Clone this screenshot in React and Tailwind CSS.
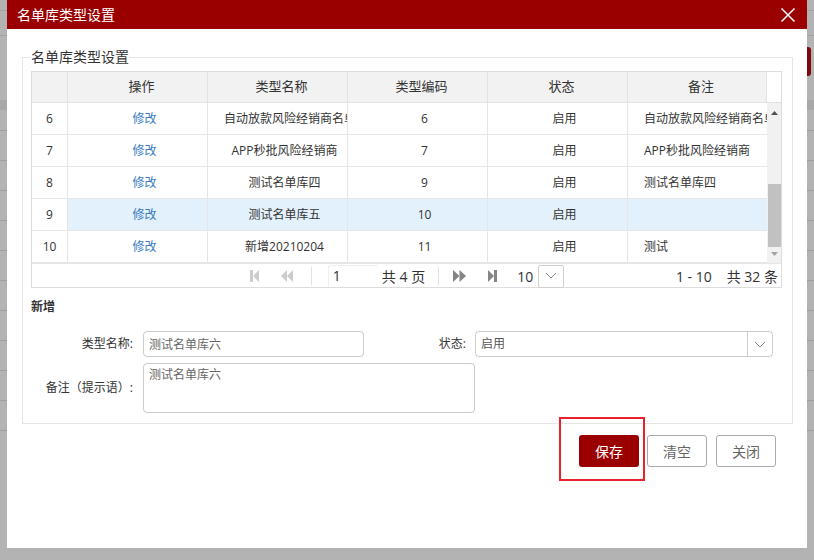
import React from 'react';

const rows = [
    { no: 6, name: '自动放款风险经销商名单', code: '6', status: '启用', note: '自动放款风险经销商名单' },
    { no: 7, name: 'APP秒批风险经销商', code: '7', status: '启用', note: 'APP秒批风险经销商' },
    { no: 8, name: '测试名单库四', code: '9', status: '启用', note: '测试名单库四' },
    { no: 9, name: '测试名单库五', code: '10', status: '启用', note: '', active: true },
    { no: 10, name: '新增20210204', code: '11', status: '启用', note: '测试' },
];

const cols = 'grid grid-cols-[36px_140px_140px_140px_140px_139px]';

const Chevron = () => (
    <svg width="12" height="7" viewBox="0 0 12 7">
        <path d="M1 1 L6 6 L11 1" fill="none" stroke="#8a8a8a" strokeWidth="1" />
    </svg>
);

const App = () => {
    return (
        <div className="relative w-[814px] h-[560px] overflow-hidden bg-[#b3b3b3] font-['Open_Sans','Noto_Sans_CJK_SC',sans-serif]">
            {/* page behind the dialog */}
            <div className="flex flex-col">
                <div className="h-[11px] border-b border-[#a3a3a3]" />
                <div className="h-[25px] border-b border-[#a3a3a3]" />
                <div className="h-[64px] flex justify-end pt-[11px]">
                    <div className="w-[40px] h-[29px] mr-[3px] rounded-r-[3px] bg-[#7d0a0a]" />
                </div>
                <div className="h-[10px] bg-[#a8a8a8]" />
                <div className="h-[21px] border-b border-[#9e9e9e]" />
                {Array.from({ length: 10 }).map((_, i) => (
                    <div key={i} className="h-[30px] border-b border-[#9e9e9e]" />
                ))}
            </div>

            {/* dialog */}
            <div className="absolute left-[7px] top-0 w-[800px] h-[548px] bg-white flex flex-col">
                <div className="h-[29px] bg-[#9a0000] flex items-center justify-between pl-[10px] pr-[12px]">
                    <span className="text-white text-[14px] leading-[20px]">名单库类型设置</span>
                    <svg width="14" height="14" viewBox="0 0 14 14">
                        <path d="M0.5 0.5 L13.5 13.5 M13.5 0.5 L0.5 13.5" stroke="#ffffff" strokeWidth="1.5" />
                    </svg>
                </div>

                <fieldset className="ml-[15px] mt-[18px] w-[771px] h-[377px] border border-[#e5e5e5] px-[8px]">
                    <legend className="text-[14px] leading-[20px] text-[#333] px-0">名单库类型设置</legend>

                    {/* grid */}
                    <div className="mt-[4px] w-[751px] border border-[#dddddd] text-[#333]">
                        <div className="flex h-[31px] border-b border-[#e2e2e2]">
                            <div className={`${cols} bg-[#f2f2f2] text-[13px]`}>
                                {['', '操作', '类型名称', '类型编码', '状态', '备注'].map((h, i) => (
                                    <div key={i} className={`flex items-center justify-center border-r border-[#e2e2e2] ${i > 0 ? 'pl-[8px]' : ''}`}>
                                        {h}
                                    </div>
                                ))}
                            </div>
                            <div className="flex-1" />
                        </div>

                        <div className="flex">
                            <div className="w-[735px] text-[12px]">
                                {rows.map((r) => (
                                    <div key={r.no} className={`${cols} h-[32px] border-b border-[#e6e6e6]`}>
                                        <div className="flex items-center justify-center border-r border-[#e6e6e6]">{r.no}</div>
                                        <div className={`flex items-center justify-center pl-[14px] border-r border-[#e6e6e6] text-[#3a7bbf] ${r.active ? 'bg-[#e3f1fc]' : ''}`}>修改</div>
                                        <div className={`leading-[31px] pl-[16px] pr-[2px] text-center whitespace-nowrap overflow-hidden border-r border-[#e6e6e6] ${r.active ? 'bg-[#e3f1fc]' : ''}`}>{r.name}</div>
                                        <div className={`flex items-center justify-center pl-[14px] border-r border-[#e6e6e6] ${r.active ? 'bg-[#e3f1fc]' : ''}`}>{r.code}</div>
                                        <div className={`flex items-center justify-center pl-[14px] border-r border-[#e6e6e6] ${r.active ? 'bg-[#e3f1fc]' : ''}`}>{r.status}</div>
                                        <div className={`leading-[31px] pl-[16px] whitespace-nowrap overflow-hidden ${r.active ? 'bg-[#e3f1fc]' : ''}`}>{r.note}</div>
                                    </div>
                                ))}
                            </div>
                            {/* scrollbar */}
                            <div className="w-[14px] h-[160px] bg-[#f1f1f1] flex flex-col items-center">
                                <svg className="mt-[8px]" width="7" height="4" viewBox="0 0 7 4">
                                    <polygon points="3.5,0 7,4 0,4" fill="#505050" />
                                </svg>
                                <div className="mt-[69px] w-[13px] h-[63px] bg-[#c1c1c1]" />
                                <svg className="mt-[5px]" width="7" height="4" viewBox="0 0 7 4">
                                    <polygon points="0,0 7,0 3.5,4" fill="#a3a3a3" />
                                </svg>
                            </div>
                        </div>

                        {/* pager */}
                        <div className="h-[24px] border-t border-[#e6e6e6] grid grid-cols-[1fr_auto_1fr] items-center text-[14px]">
                            <div />
                            <div className="flex items-center h-full">
                                <svg width="10" height="12" viewBox="0 0 10 12">
                                    <rect x="1" y="0" width="3" height="12" fill="#cccccc" />
                                    <polygon points="10,0 10,12 4,6" fill="#cccccc" />
                                </svg>
                                <svg className="ml-[22px]" width="12" height="12" viewBox="0 0 12 12">
                                    <polygon points="6,0 6,12 0,6" fill="#cccccc" />
                                    <polygon points="12,0 12,12 6,6" fill="#cccccc" />
                                </svg>
                                <div className="ml-[18px] w-px h-[18px] bg-[#e2e2e2]" />
                                <div className="ml-[16px] w-[50px] h-[22px] border-t border-l border-[#f0f0f0] rounded-tl-[3px] pl-[4px] leading-[20px]">1</div>
                                <span className="ml-[4px]">共 4 页</span>
                                <div className="ml-[13px] w-px h-[18px] bg-[#e2e2e2]" />
                                <svg className="ml-[14px]" width="13" height="12" viewBox="0 0 13 12">
                                    <polygon points="0,0 0,12 6.5,6" fill="#858585" />
                                    <polygon points="6.5,0 6.5,12 13,6" fill="#858585" />
                                </svg>
                                <svg className="ml-[22px]" width="10" height="12" viewBox="0 0 10 12">
                                    <polygon points="0,0 0,12 6,6" fill="#858585" />
                                    <rect x="6" y="0" width="3" height="12" fill="#858585" />
                                </svg>
                                <div className="ml-[14px] w-[26px] pl-[5px] leading-[22px] mt-[2px]">10</div>
                                <div className="w-[26px] h-[23px] border border-[#cfcfcf] rounded-[2px] flex items-start justify-center pt-[6px]">
                                    <Chevron />
                                </div>
                            </div>
                            <div className="flex justify-end pr-[3px] whitespace-nowrap">
                                <span>1 - 10</span>
                                <span className="ml-[15px]">共 32 条</span>
                            </div>
                        </div>
                    </div>

                    {/* add form */}
                    <div className="mt-[9px] text-[12px] leading-[20px] font-bold text-[#333]">新增</div>

                    <div className="mt-[14px] flex items-center text-[12px] text-[#333]">
                        <div className="w-[102px] text-right">类型名称:</div>
                        <input
                            readOnly
                            defaultValue="测试名单库六"
                            className="ml-[10px] w-[221px] h-[26px] border border-[#cccccc] rounded-[4px] px-[5px] text-[#666] outline-none"
                        />
                        <div className="w-[102px] text-right">状态:</div>
                        <div className="ml-[9px] w-[298px] h-[26px] border border-[#cccccc] rounded-[4px] flex">
                            <div className="flex-1 pl-[5px] leading-[24px] text-[#555]">启用</div>
                            <div className="w-[25px] border-l border-[#cccccc] flex items-center justify-center">
                                <Chevron />
                            </div>
                        </div>
                    </div>

                    <div className="mt-[6px] flex items-center text-[12px] text-[#333]">
                        <div className="w-[102px] text-right">备注（提示语）:</div>
                        <textarea
                            readOnly
                            defaultValue="测试名单库六"
                            className="ml-[10px] w-[332px] h-[50px] border border-[#cccccc] rounded-[4px] px-[5px] py-[2px] text-[#666] resize-none outline-none"
                        />
                    </div>
                </fieldset>

                {/* buttons */}
                <div className="mt-[11px] flex justify-end pr-[31px] text-[14px]">
                    <div className="relative">
                        <button className="w-[60px] h-[32px] rounded-[3px] bg-[#9a0000] text-white">保存</button>
                        <div className="absolute -left-[20px] -top-[18px] w-[86px] h-[64px] border-2 border-[#e8212b]" />
                    </div>
                    <button className="ml-[8px] w-[60px] h-[32px] rounded-[3px] border border-[#aaaaaa] bg-white text-[#666]">清空</button>
                    <button className="ml-[9px] w-[60px] h-[32px] rounded-[3px] border border-[#aaaaaa] bg-white text-[#666]">关闭</button>
                </div>
            </div>
        </div>
    );
};

export default App;
